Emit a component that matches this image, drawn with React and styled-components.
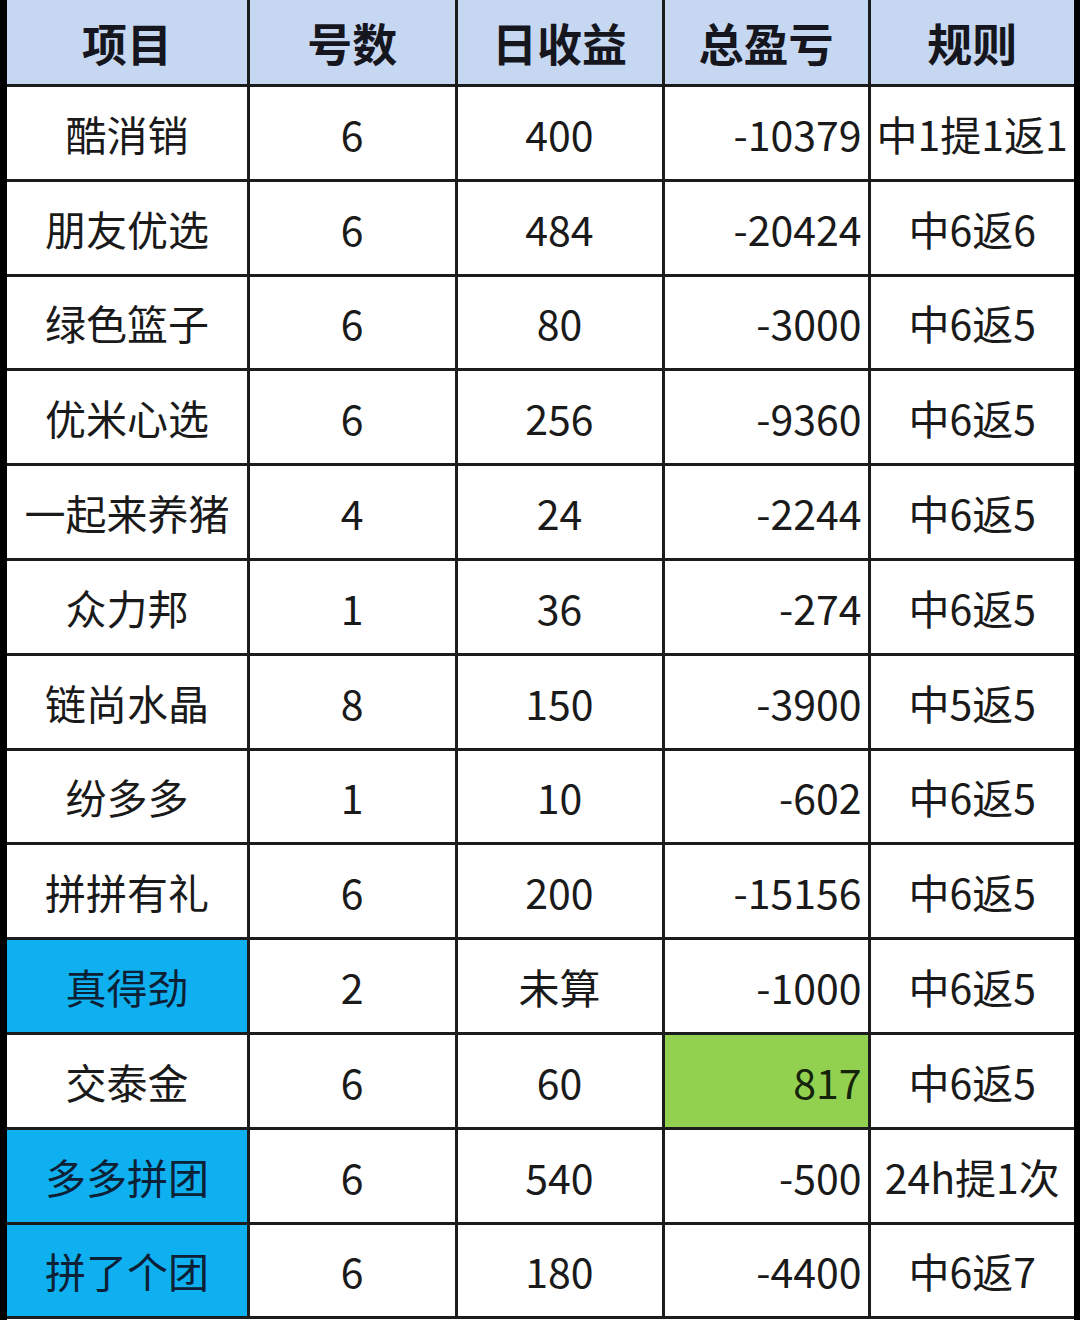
import React from "react";
import styled, { createGlobalStyle } from "styled-components";

const GlobalStyle = createGlobalStyle`
  html, body {
    margin: 0;
    padding: 0;
    background: #000;
  }
`;

const Page = styled.div`
  width: 1080px;
  height: 1320px;
  box-sizing: border-box;
  padding: 0 6px 0 7px;
  background: #000;
  overflow: hidden;
`;

const Sheet = styled.div`
  height: 100%;
  background: #fff;
`;

const Grid = styled.div`
  display: grid;
  grid-template-columns: 240px 204.5px 204px 203px 1fr;
  grid-template-rows: 84px repeat(13, 91.8px);
  gap: 3px;
  background: #1c1c1c;
  border-bottom: 3px solid #1c1c1c;
  font-family: "Noto Sans CJK SC", "Noto Sans", sans-serif;
`;

const Cell = styled.div`
  display: flex;
  align-items: center;
  justify-content: ${p => (p.$align === "right" ? "flex-end" : "center")};
  padding: 0 ${p => (p.$align === "right" ? "6px" : "0")} 0 0;
  background: ${p => p.$bg || "#fff"};
  color: ${p => p.$color || "#1a1a1a"};
  font-size: 41px;
  font-weight: 400;
  white-space: nowrap;
  overflow: hidden;
`;

const HeadCell = styled(Cell)`
  background: #c6d8f1;
  color: #16161f;
  font-size: 45px;
  font-weight: 700;
  padding: 0;
`;

const BLUE = "#0fb0f0";
const GREEN = "#92d050";

const headers = ["项目", "号数", "日收益", "总盈亏", "规则"];

const rows = [
  { name: "酷消销", count: "6", daily: "400", total: "-10379", rule: "中1提1返1" },
  { name: "朋友优选", count: "6", daily: "484", total: "-20424", rule: "中6返6" },
  { name: "绿色篮子", count: "6", daily: "80", total: "-3000", rule: "中6返5" },
  { name: "优米心选", count: "6", daily: "256", total: "-9360", rule: "中6返5" },
  { name: "一起来养猪", count: "4", daily: "24", total: "-2244", rule: "中6返5" },
  { name: "众力邦", count: "1", daily: "36", total: "-274", rule: "中6返5" },
  { name: "链尚水晶", count: "8", daily: "150", total: "-3900", rule: "中5返5" },
  { name: "纷多多", count: "1", daily: "10", total: "-602", rule: "中6返5" },
  { name: "拼拼有礼", count: "6", daily: "200", total: "-15156", rule: "中6返5" },
  { name: "真得劲", count: "2", daily: "未算", total: "-1000", rule: "中6返5", nameBg: BLUE },
  { name: "交泰金", count: "6", daily: "60", total: "817", rule: "中6返5", totalBg: GREEN },
  { name: "多多拼团", count: "6", daily: "540", total: "-500", rule: "24h提1次", nameBg: BLUE },
  { name: "拼了个团", count: "6", daily: "180", total: "-4400", rule: "中6返7", nameBg: BLUE }
];

export default function App() {
  return (
    <>
      <GlobalStyle />
      <Page>
        <Sheet>
          <Grid>
            {headers.map(h => (
              <HeadCell key={h}>{h}</HeadCell>
            ))}
            {rows.map(r => (
              <React.Fragment key={r.name}>
                <Cell $bg={r.nameBg} $color={r.nameBg ? "#0c2036" : undefined}>
                  {r.name}
                </Cell>
                <Cell>{r.count}</Cell>
                <Cell>{r.daily}</Cell>
                <Cell $align="right" $bg={r.totalBg} $color={r.totalBg ? "#14240a" : undefined}>
                  {r.total}
                </Cell>
                <Cell>{r.rule}</Cell>
              </React.Fragment>
            ))}
          </Grid>
        </Sheet>
      </Page>
    </>
  );
}
